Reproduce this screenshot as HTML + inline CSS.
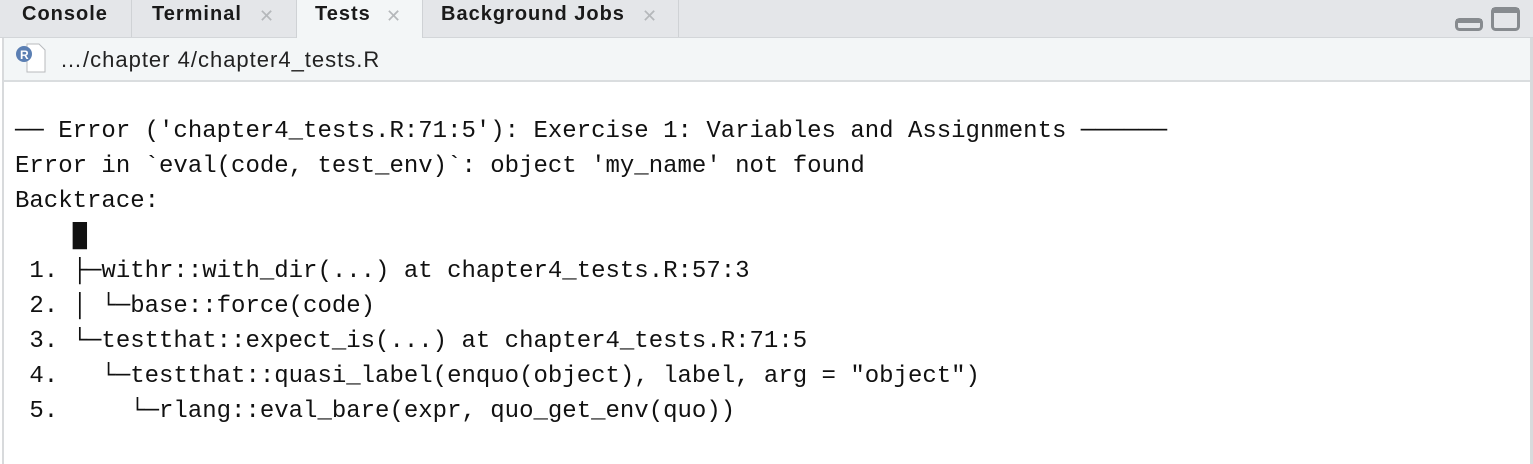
<!DOCTYPE html>
<html><head><style>
html,body{margin:0;padding:0;width:1533px;height:464px;overflow:hidden;background:#fff;font-family:"Liberation Sans",sans-serif}
.tabs{position:absolute;left:0;top:0;width:1533px;height:37px;background:#e4e6e9;border-bottom:1px solid #d3d6d9}
.tab{position:absolute;top:0;height:37px;border-right:1px solid #cfd2d5;box-sizing:border-box}
.t{position:absolute;top:3px;white-space:nowrap;font-weight:bold;font-size:20px;letter-spacing:1px;color:#1a1a1a}
.x{position:absolute;top:6px;color:#b5b8bb;font-size:18px}
.tool{position:absolute;left:3px;top:38px;width:1527px;height:42px;background:#f3f6f7;border-bottom:2px solid #dadddf}
.left{position:absolute;left:2px;top:38px;width:2px;height:426px;background:#d8dadc}
.right{position:absolute;left:1530px;top:38px;width:3px;height:426px;background:#d8dadc}
pre{position:absolute;left:15px;top:114px;margin:0;font-family:"Liberation Mono",monospace;font-size:24px;line-height:35px;color:#111}
</style></head><body>
<div class="tabs">
<div class="tab" style="left:0;width:132px"></div>
<div class="tab" style="left:131px;width:166px"></div>
<div class="tab" style="left:296px;width:127px;background:#f3f6f7;height:38px;border-left:1px solid #cfd2d5"></div>
<div class="tab" style="left:422px;width:257px"></div>
<div class="t" style="left:22px">Console</div>
<div class="t" style="left:152px">Terminal</div><div class="x" style="left:259px">✕</div>
<div class="t" style="left:315px">Tests</div><div class="x" style="left:386px">✕</div>
<div class="t" style="left:441px">Background Jobs</div><div class="x" style="left:642px">✕</div>
<svg style="position:absolute;left:1455px;top:6px" width="66" height="26"><rect x="1.5" y="13.5" width="25" height="10" rx="3" fill="none" stroke="#878b8f" stroke-width="3"/><rect x="1" y="13" width="26" height="4" fill="#878b8f"/><rect x="37.5" y="2.5" width="26" height="21" rx="3" fill="none" stroke="#878b8f" stroke-width="3"/><rect x="37" y="2" width="27" height="5" fill="#878b8f"/></svg>
</div>
<div class="tool">
<svg style="position:absolute;left:10px;top:4px" width="36" height="32"><path d="M14 2h12l6 6v22H14z" fill="#fff" stroke="#b8bbbe"/><circle cx="11" cy="12" r="8" fill="#5b7fb3"/><text x="7" y="17" font-size="12" font-weight="bold" fill="#fff" font-family="Liberation Sans">R</text></svg>
<div style="position:absolute;left:57px;top:9px;font-size:22px;letter-spacing:1px;color:#222;white-space:nowrap">…/chapter 4/chapter4_tests.R</div>
</div>
<div class="left"></div><div class="right"></div>
<pre>── Error ('chapter4_tests.R:71:5'): Exercise 1: Variables and Assignments ──────
Error in `eval(code, test_env)`: object 'my_name' not found
Backtrace:
    █
 1. ├─withr::with_dir(...) at chapter4_tests.R:57:3
 2. │ └─base::force(code)
 3. └─testthat::expect_is(...) at chapter4_tests.R:71:5
 4.   └─testthat::quasi_label(enquo(object), label, arg = "object")
 5.     └─rlang::eval_bare(expr, quo_get_env(quo))</pre>
</body></html>
